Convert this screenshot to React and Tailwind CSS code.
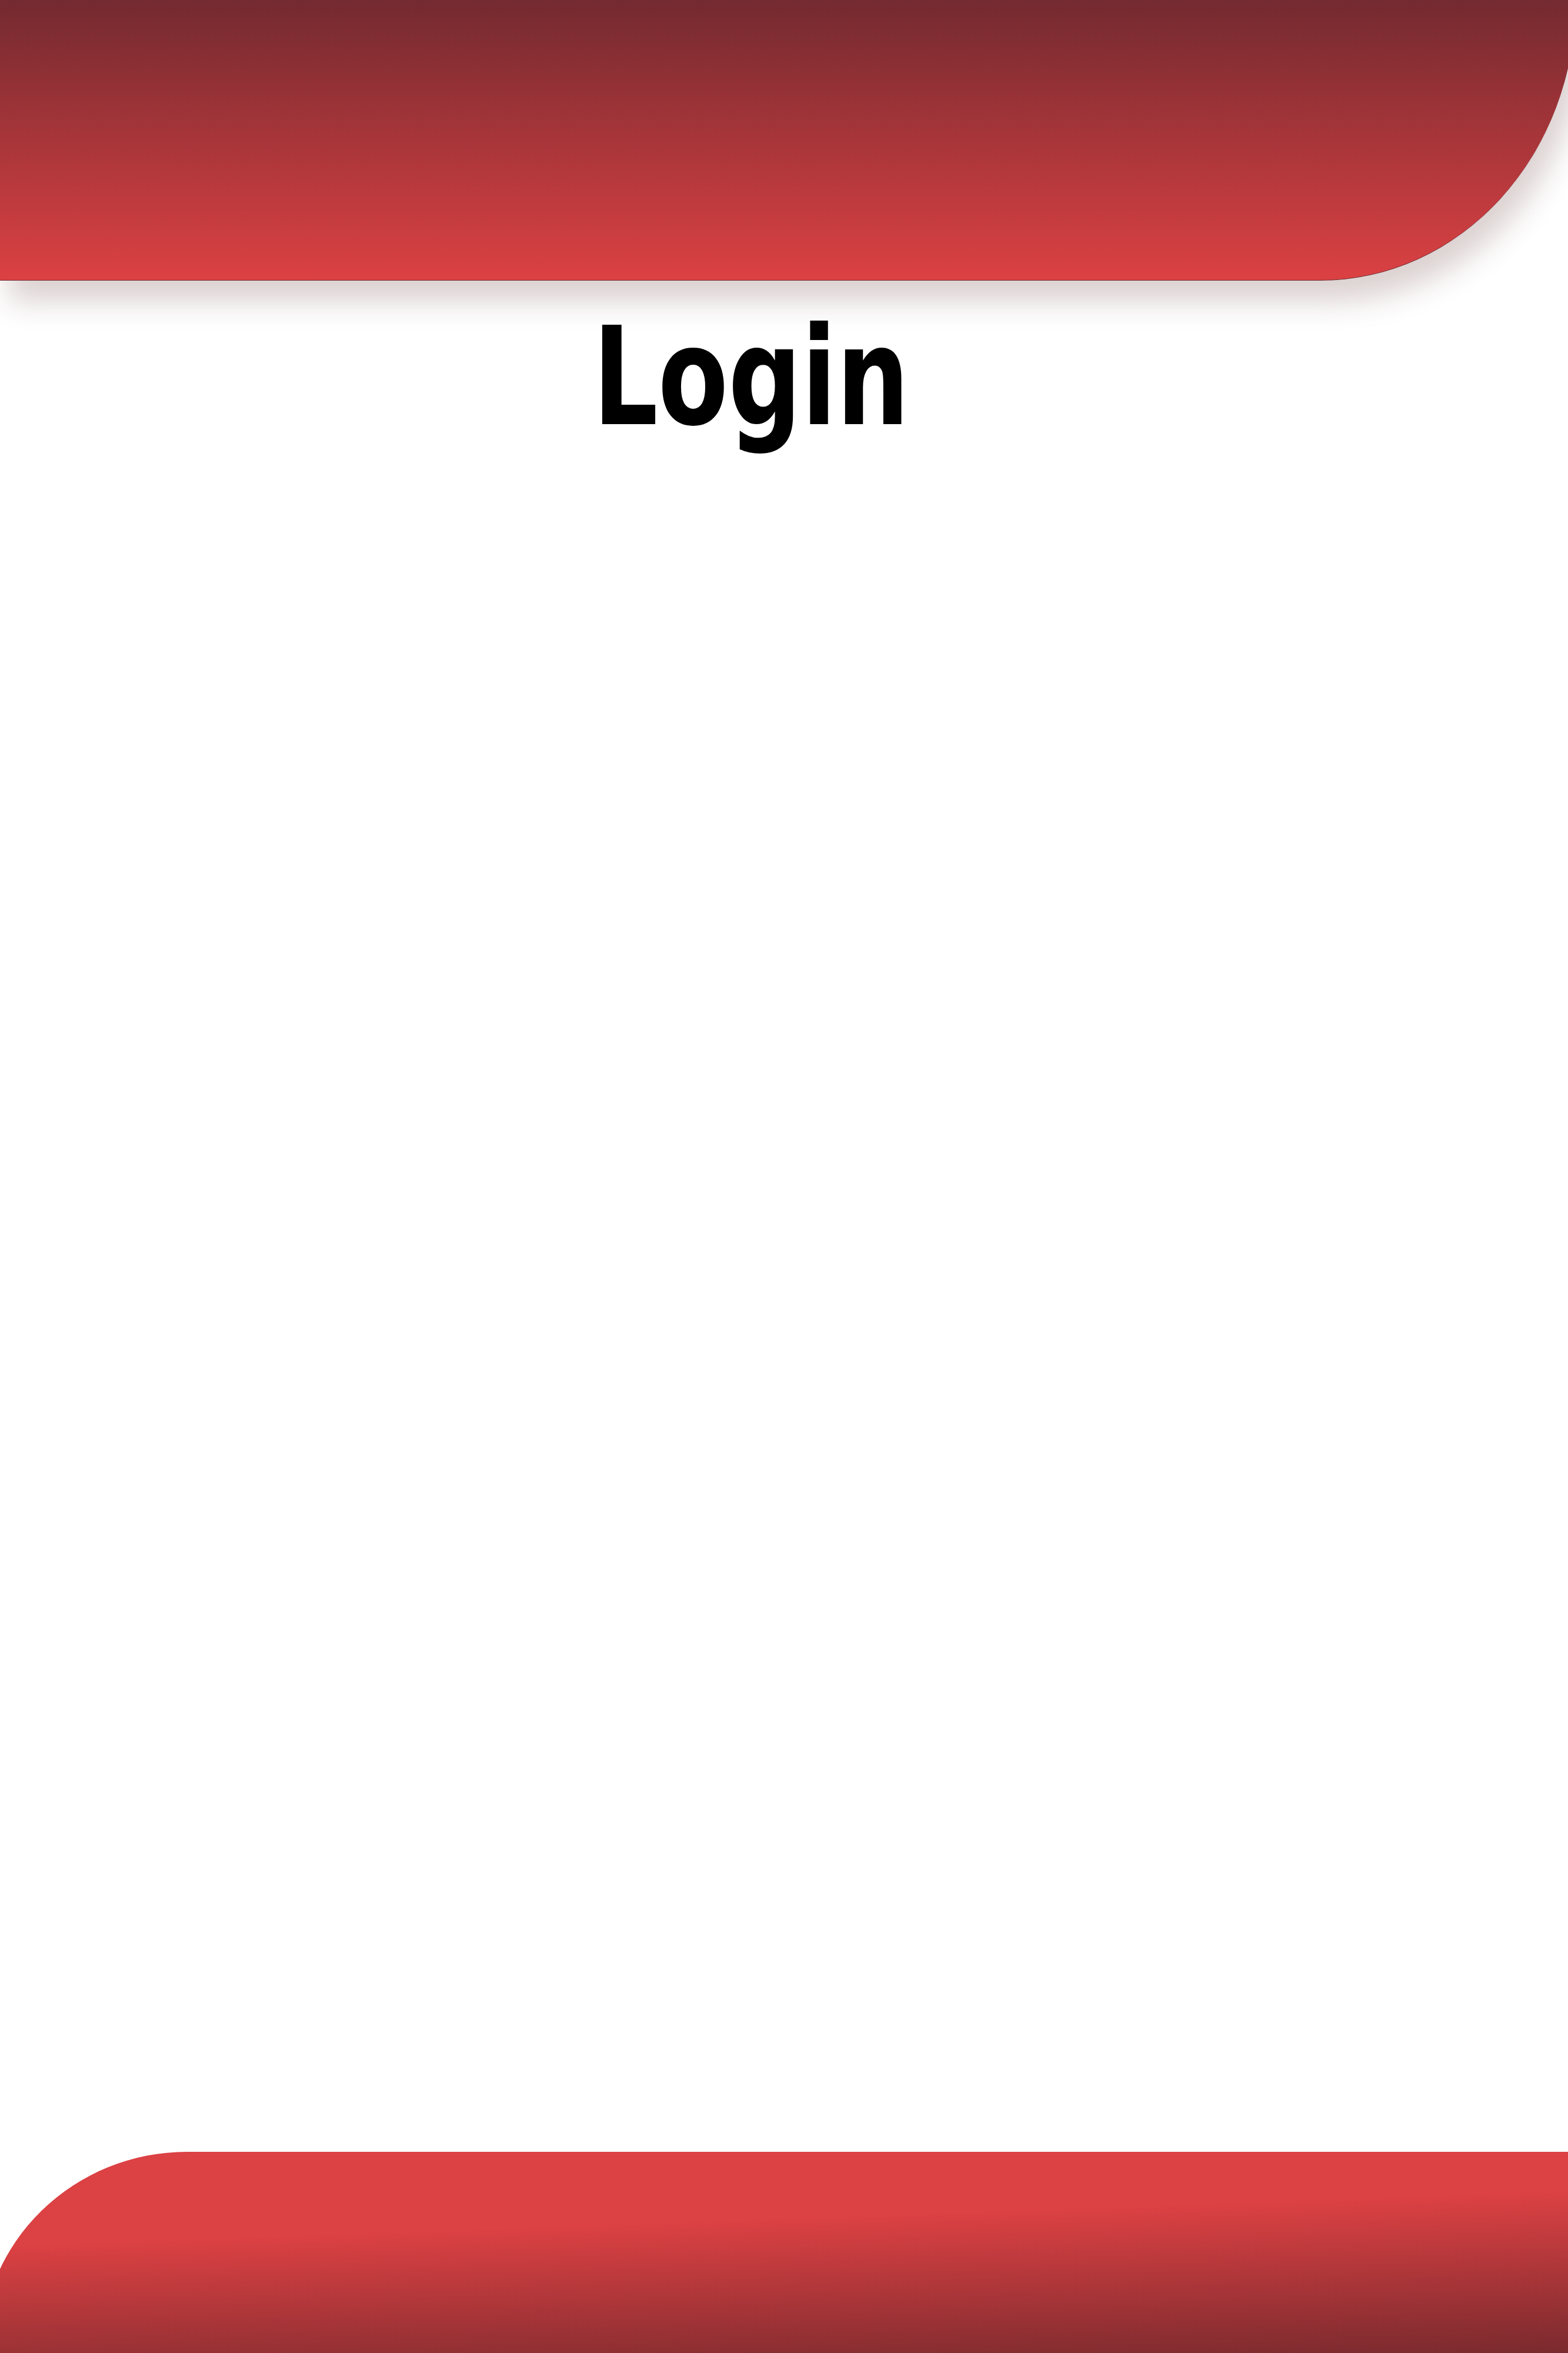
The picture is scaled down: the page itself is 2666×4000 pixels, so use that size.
export default function App() {
  return (
    <div className="flex flex-col h-[4000px] bg-white overflow-hidden">
      <header className="relative z-10 h-[477px] shrink-0 -mr-[13px] bg-[linear-gradient(to_bottom,#732a30,#dc4143)] rounded-br-[434px_477px] border-b border-[#6e2a2e] shadow-[15px_35px_50px_rgba(90,40,40,0.22)]" />

      <main className="flex-1 flex justify-center pr-[112px]">
        <h1
          className="mt-[48px] text-[232px] leading-none font-bold text-black scale-x-[0.833] h-fit"
          style={{ fontFamily: '"Liberation Sans Narrow", "DejaVu Sans Condensed", "Liberation Sans", sans-serif' }}
        >
          Login
        </h1>
      </main>

      <footer className="h-[342px] shrink-0 -ml-[32px] bg-[linear-gradient(178deg,#dc4143_37%,#7a2a2e_100%)] rounded-tl-[350px_342px]" />
    </div>
  );
}
